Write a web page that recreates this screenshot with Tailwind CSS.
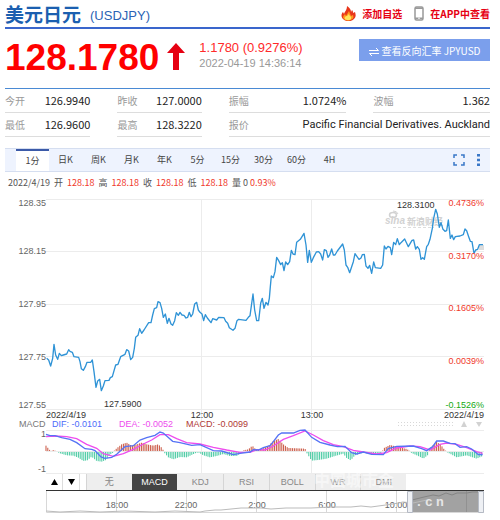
<!DOCTYPE html>
<html lang="zh-CN">
<head>
    <meta charset="UTF-8">
    <title>美元日元 (USDJPY)</title>
    <meta name="viewport" content="width=device-width, initial-scale=1.0">
    <script src="https://cdn.jsdelivr.net/npm/@tailwindcss/browser@4"></script>
</head>
<body class="bg-white pl-[5px] pr-[10px] font-['Noto_Sans_CJK_SC',sans-serif] text-[#333]">
    <!-- Header -->
    <header class="flex h-[29px] items-center border-b-2 border-[#3a66cc]">
        <h1 class="text-[19px] leading-[26px] font-bold text-[#1b5fb0]">美元日元</h1>
        <span class="ml-[9px] mt-1 font-['Liberation_Sans',sans-serif] text-[13px] text-[#2a63b5]">(USDJPY)</span>
        <nav class="ml-auto flex items-center text-[10px] font-bold text-[#e60012]">
            <a href="#" class="flex items-center gap-[6px]">
                <svg class="h-[15px] w-[15px]" viewBox="0 0 15 15">
                    <path d="M2 13C0 11 0 8 2 6l1 2C4 5 6 4 6 0c3 2 4 4 4 6l1-2c1 1 1 2 1 3l2-1c1 3 1 5-1 7-3 3-8 3-11 0z" fill="#e8361a"/>
                    <path d="M3 13c-2-2 0-4 1-5l1 2 3-5 2 5 2-1c1 2 0 4-1 4-2 2-6 2-8 0z" fill="#ff9a1f"/>
                    <path d="M4 13c-1-2 1-3 2-3l2-2c0 2 3 2 2 5-2 2-5 1-6 0z" fill="#ffe45c"/>
                </svg>
                添加自选
            </a>
            <a href="#" class="ml-3 flex items-center gap-[6px]">
                <svg class="h-[15px] w-[10px]" viewBox="0 0 10 15">
                    <rect x="1" y="1" width="8" height="13" rx="1.5" fill="#fff" stroke="#999" stroke-width="1.5"/>
                    <path d="M1 2.2h8M1 12.2h8" stroke="#999" stroke-width="1.6"/>
                    <circle cx="5" cy="12.3" r="0.8" fill="#fff"/>
                </svg>
                在APP中查看
            </a>
        </nav>
    </header>

    <!-- Price -->
    <section class="flex h-[59px] items-start font-['Liberation_Sans',sans-serif]">
        <strong class="mt-2 text-[37px] leading-[42px] text-[#ff0000]">128.1780</strong>
        <svg class="mt-[14px] ml-2 h-7 w-[18px]" viewBox="0 0 18 28">
            <path d="M9 0L18 10H12V27H6V10H0z" fill="#e60012"/>
        </svg>
        <div class="mt-[11px] ml-[14px]">
            <p class="text-[13px] leading-4 text-[#ff2a2a]">1.1780 (0.9276%)</p>
            <p class="text-[11px] leading-[14px] text-[#999]">2022-04-19 14:36:14</p>
        </div>
        <button class="mt-[10px] ml-auto flex h-[22px] w-[131px] items-center justify-center gap-[3px] bg-[#7b9fec] font-['Noto_Sans_CJK_SC',sans-serif] text-[10px] text-white">
            <svg class="mt-1 h-2 w-[10px]" viewBox="0 0 10 8" fill="none" stroke="#fff">
                <path d="M0 2.5H9.5L7 0M10 5.5H.5L3 8"/>
            </svg>
            查看反向汇率 JPYUSD
        </button>
    </section>

    <!-- Quote details -->
    <dl class="grid grid-cols-[85fr_84fr_117fr_116fr] gap-x-[27px] border-t border-[#4a8ad4] text-[11px] leading-[23px] text-[#222]">
        <div class="flex justify-between border-b border-[#ddd]"><dt class="text-[10px] text-[#999]">今开</dt><dd>126.9940</dd></div>
        <div class="flex justify-between border-b border-[#ddd]"><dt class="text-[10px] text-[#999]">昨收</dt><dd>127.0000</dd></div>
        <div class="flex justify-between border-b border-[#ddd]"><dt class="text-[10px] text-[#999]">振幅</dt><dd>1.0724%</dd></div>
        <div class="flex justify-between border-b border-[#ddd]"><dt class="text-[10px] text-[#999]">波幅</dt><dd>1.362</dd></div>
        <div class="flex justify-between border-b border-[#ddd]"><dt class="text-[10px] text-[#999]">最低</dt><dd>126.9600</dd></div>
        <div class="flex justify-between border-b border-[#ddd]"><dt class="text-[10px] text-[#999]">最高</dt><dd>128.3220</dd></div>
        <div class="col-span-2 flex justify-between border-b border-[#ddd]"><dt class="text-[10px] text-[#999]">报价</dt><dd class="font-['Roboto',sans-serif]">Pacific Financial Derivatives. Auckland</dd></div>
    </dl>

    <!-- Period tabs -->
    <nav class="mt-[11px] flex h-6 items-stretch border-y border-[#d5def0] bg-[#eef3fe] pl-[11px] text-[9px] text-[#444]">
        <button class="w-[33px] border-t-2 border-[#3b5aa8] bg-white">1分</button>
        <button class="w-[33px]">日K</button>
        <button class="w-[33px]">周K</button>
        <button class="w-[33px]">月K</button>
        <button class="w-[33px]">年K</button>
        <button class="w-[33px]">5分</button>
        <button class="w-[33px]">15分</button>
        <button class="w-[33px]">30分</button>
        <button class="w-[33px]">60分</button>
        <button class="w-[33px]">4H</button>
        <button class="mr-3 ml-auto" aria-label="全屏">
            <svg class="h-3 w-3" viewBox="0 0 12 12" fill="none" stroke="#3a78c8" stroke-width="1.5">
                <path d="M1 4V1h3M8 1h3v3M11 8v3H8M4 11H1V8"/>
            </svg>
        </button>
        <button class="mr-[10px]" aria-label="更多">
            <svg class="h-3 w-[3px]" viewBox="0 0 3 12" fill="#3a78c8">
                <path d="M0 0h3v2.5H0zM0 4.7h3v2.5H0zM0 9.5h3V12H0z"/>
            </svg>
        </button>
    </nav>

    <p class="flex gap-1 pl-[3px] text-[9px] leading-[22px] text-[#555]">
        <span>2022/4/19</span>
        <span>开</span><span class="text-[#f0392b]">128.18</span>
        <span>高</span><span class="text-[#f0392b]">128.18</span>
        <span>收</span><span class="text-[#f0392b]">128.18</span>
        <span>低</span><span class="text-[#f0392b]">128.18</span>
        <span>量 0 <span class="text-[#f0392b]">0.93%</span></span>
    </p>

    <!-- Price and MACD charts -->
    <svg class="block w-full font-['Liberation_Sans',sans-serif] text-[9px]" viewBox="5 194 485 280">
        <path d="M46 199.5H484M46 251.5H484M46 304.5H484M46 356.5H484M46 409.5H484M46 430.5H484M46 451.5H484M46 473.5H484M201.5 199V473M311.5 199V473" stroke="#ececec" fill="none"/>
        <!-- Watermark -->
        <g fill="#d2d2d2">
            <text x="385" y="224" class="text-[10px] font-bold italic">sina</text>
            <text x="407" y="225" class="font-['Noto_Sans_CJK_SC',sans-serif] text-[9px] font-bold">新浪财经</text>
            <ellipse cx="393" cy="215" rx="3.5" ry="2.5" fill="none" stroke="#d2d2d2" stroke-width="1.5"/>
            <path d="M393 211a5 4 0 0 1 5 3" fill="none" stroke="#d2d2d2"/>
            <path d="M393 227.5h41" stroke="#ddd" stroke-dasharray="3 2"/>
        </g>
        <path d="M479 245h5v5h-5z" fill="#ddd"/>
        <g transform="translate(0 190) scale(0.33333)">
            <polyline fill="none" stroke="#2f93d6" stroke-width="4" stroke-linejoin="round" points="140,505 146,510 152,528 158,505 162,463 167,495 173,508 178,490 184,497 190,495 200,492 206,479 210,484 217,487 222,500 236,502 240,515 244,536 250,541 256,530 261,517 272,517 277,510 282,545 288,592 293,573 299,568 304,602 310,588 315,572 327,571 331,563 337,560 347,525 354,523 362,500 375,493 380,479 386,483 392,509 398,502 403,475 407,442 414,436 419,416 425,430 432,420 446,398 453,398 458,375 463,356 470,353 474,335 480,338 485,355 490,382 496,372 502,400 507,385 513,402 518,406 524,392 529,368 535,376 540,367 546,375 552,376 558,384 563,382 568,367 573,380 578,372 584,342 590,337 595,360 600,367 606,372 611,392 616,374 622,384 633,398 638,386 650,390 656,382 672,383 677,394 683,400 688,413 699,421 705,415 711,392 716,388 738,391 745,382 750,377 759,312 764,360 770,392 776,392 782,340 787,325 792,355 798,337 804,345 808,325 811,290 814,258 820,263 825,245 830,202 836,212 842,224 847,218 852,242 857,216 863,224 869,215 874,181 879,192 885,194 890,157 901,148 912,130 918,165 923,217 928,181 934,217 940,203 949,186 956,185 962,192 968,210 973,179 979,182 984,202 989,195 995,177 1000,195 1005,195 1012,183 1028,162 1033,180 1038,225 1043,232 1049,248 1055,230 1060,215 1065,191 1077,208 1083,204 1087,194 1093,193 1098,228 1104,235 1109,226 1115,250 1121,216 1126,233 1142,235 1148,225 1153,168 1158,177 1164,169 1171,173 1175,194 1181,157 1187,164 1192,146 1198,164 1203,158 1214,147 1225,170 1236,151 1241,150 1247,177 1252,170 1258,178 1263,208 1268,203 1273,208 1280,170 1285,163 1290,148 1297,115 1301,85 1307,58 1312,72 1318,112 1323,98 1329,118 1335,124 1340,122 1345,90 1351,145 1356,135 1361,149 1366,140 1380,138 1390,134 1395,117 1400,122 1406,140 1411,154 1416,155 1422,190 1427,180 1433,178 1438,164 1449,164"/>
        </g>
        <g fill="#666" text-anchor="end">
            <text x="46" y="206">128.35</text>
            <text x="46" y="254">128.15</text>
            <text x="46" y="307">127.95</text>
            <text x="46" y="360">127.75</text>
            <text x="46" y="408">127.55</text>
            <text x="46" y="437">1</text>
            <text x="46" y="472">-1</text>
        </g>
        <g fill="#f0392b" text-anchor="end">
            <text x="484" y="206">0.4736%</text>
            <text x="484" y="259">0.3170%</text>
            <text x="484" y="311">0.1605%</text>
            <text x="484" y="364">0.0039%</text>
            <text x="484" y="408" fill="#12a812">-0.1526%</text>
        </g>
        <g fill="#333">
            <text x="397" y="208">128.3100</text>
            <text x="104" y="407">127.5900</text>
            <text x="46" y="418">2022/4/19</text>
            <text x="202" y="418" text-anchor="middle">12:00</text>
            <text x="312" y="418" text-anchor="middle">13:00</text>
            <text x="484" y="418" text-anchor="end">2022/4/19</text>
        </g>
        <text x="19" y="427" fill="#777">MACD</text>
        <text x="52" y="427" fill="#4d6bfa">DIF: -0.0101</text>
        <text x="119" y="427" fill="#ee4dee">DEA: -0.0052</text>
        <text x="186" y="427" fill="#b03a35">MACD: -0.0099</text>
        <path d="M398 422.5h57M398 425.5h57" stroke="#d8d8d8" stroke-dasharray="1 2"/>
        <path d="M461 427l3-6 3 6zM476 422h6l-3 5z" fill="#d2d2d2"/>
        <g transform="translate(0 405) scale(0.33333)" fill="none" stroke-width="3">
            <path id="macdUp" stroke="#c8503c"/>
            <path id="macdDown" stroke="#45c9a0"/>
            <polyline stroke="#ee4dee" stroke-width="4" points="138,95 165,93 200,95 230,101 260,118 290,130 310,146 340,154 370,146 400,133 430,117 455,105 480,89 505,89 530,101 560,113 600,117 640,127 680,135 720,142 750,142 770,134 795,135 820,123 850,103 880,92 915,78 940,90 970,107 1000,119 1030,125 1060,136 1090,141 1130,147 1160,143 1190,129 1230,123 1260,125 1290,135 1320,118 1340,114 1370,118 1400,128 1430,140 1448,145"/>
            <polyline stroke="#5673f5" stroke-width="4" points="138,88 150,92 165,92 185,98 210,103 230,113 255,131 275,133 285,137 303,156 315,160 335,157 350,148 375,125 400,122 420,105 440,98 465,91 480,81 490,84 518,109 540,113 575,121 600,119 640,137 665,138 700,149 720,145 750,141 760,134 775,135 790,128 810,122 820,110 835,90 845,84 880,84 900,76 915,75 935,97 960,112 990,120 1012,125 1035,124 1055,143 1070,147 1090,141 1115,148 1150,149 1165,131 1190,124 1240,123 1265,131 1280,137 1298,125 1310,108 1330,108 1350,115 1365,116 1380,127 1400,125 1415,132 1435,149 1448,149"/>
        </g>
    </svg>

    <!-- Indicator tabs -->
    <div class="relative mr-[6px] ml-[41px] flex h-[17px] border-b border-[#333] text-[9px] leading-4 text-[#888]">
        <button class="w-[17px] border-r border-[#ddd] text-black" aria-label="上移"><svg class="mx-auto h-[6px] w-[7px]" viewBox="0 0 7 6"><path d="M3.5 0L7 6H0z"/></svg></button>
        <button class="w-[17px] border-r border-[#ddd] text-black" aria-label="下移"><svg class="mx-auto h-[6px] w-[7px]" viewBox="0 0 7 6"><path d="M0 0H7L3.5 6z"/></svg></button>
        <div class="ml-[6px] mr-[78px] grid flex-1 grid-cols-7 font-['Liberation_Sans','Noto_Sans_CJK_SC',sans-serif]">
            <button class="border-l border-[#d5d5d5] bg-[#eee]">无</button>
            <button class="bg-[#444] text-white">MACD</button>
            <button class="bg-[#eee]">KDJ</button>
            <button class="border-l border-[#d5d5d5] bg-[#eee]">RSI</button>
            <button class="border-l border-[#d5d5d5] bg-[#eee]">BOLL</button>
            <button class="border-l border-[#d5d5d5] bg-[#eee]">WR</button>
            <button class="border-l border-[#d5d5d5] bg-[#eee]">DMI</button>
        </div>
        <svg class="pointer-events-none absolute -top-1 right-[42px] h-5 w-[130px] overflow-visible" viewBox="0 0 130 20" aria-hidden="true">
            <text x="2" y="16" fill="#fff" fill-opacity="0.5" class="font-['Noto_Sans_CJK_SC',sans-serif] text-[16px] font-bold">中国城市金</text>
        </svg>
    </div>

    <!-- Time range -->
    <svg class="block w-full font-['Liberation_Sans',sans-serif] text-[9px]" viewBox="5 490 485 24">
        <path d="M46.5 490V511.5H484M116.5 490V511M186.5 490V511M256.5 490V511M326.5 490V511M396.5 490V511" fill="none" stroke="#d8d8d8"/>
        <g fill="#666" text-anchor="middle">
            <text x="117" y="507">18:00</text>
            <text x="186" y="507">22:00</text>
            <text x="257" y="507">2:00</text>
            <text x="327" y="507">6:00</text>
            <text x="396" y="507">10:00</text>
        </g>
        <path d="M412 490H478V511H412z" fill="#a2a2a2"/>
        <path d="M466.5 490V511" stroke="#919191"/>
        <path d="M46 510l14 1 20-1 20 1 25-1 30 1 20-1 25 1 5-1 10-1 6 0 10-1 10-1 20 0 10 1 15-1 25 0 20-1 20 0 10-1 10 1 22-3 10-2 10 1 14-3" fill="none" stroke="#bbb"/>
        <path d="M412 499l12-3 9-2 6 1 7-3 6 2 5-2 10 0 5-1 6 0" fill="none" stroke="#858585"/>
        <path d="M407.5 490.5h5v21h-5zM478.5 490.5h5v21h-5z" fill="#eef0f4" stroke="#b5bac4"/>
        <text y="505" fill="#e6e6e6" class="font-['Liberation_Mono',monospace] text-[13px] font-bold"><tspan x="415">.</tspan><tspan x="425">c</tspan><tspan x="436">n</tspan></text>
    </svg>

    <script>
        // MACD histogram: [x, height] outline, bars are interpolated between the points
        const outline = [[138,16],[150,2],[155,0],[162,4],[166,0],[172,0],[180,-4],[200,-10],[220,-11],[235,-17],[250,-27],[262,-25],[275,-14],[290,-27],[305,-29],[318,-24],[330,-8],[342,0],[350,8],[365,20],[380,25],[395,16],[410,20],[425,25],[440,20],[460,16],[475,20],[485,10],[492,-1],[505,-16],[520,-22],[540,-15],[560,-16],[585,-4],[595,-1],[610,-10],[630,-16],[650,-12],[670,-6],[690,-12],[710,-12],[730,2],[745,5],[757,16],[768,4],[785,6],[805,15],[820,30],[835,36],[850,20],[865,9],[890,8],[915,7],[922,-6],[935,-26],[955,-24],[980,-20],[1005,-12],[1030,-5],[1040,-18],[1052,-25],[1065,-10],[1090,-2],[1120,-8],[1145,-7],[1150,8],[1170,18],[1195,12],[1220,6],[1235,-3],[1255,-12],[1270,-20],[1285,-8],[1290,8],[1310,28],[1325,15],[1335,2],[1350,-5],[1370,-16],[1400,-10],[1430,-20],[1448,-12]];
        let up = '';
        let down = '';
        let i = 0;
        for (let x = 138; x <= 1448; x += 5.4) {
            while (i < outline.length - 2 && outline[i + 1][0] < x) i++;
            const [x1, h1] = outline[i];
            const [x2, h2] = outline[i + 1];
            const h = h1 + (h2 - h1) * (x - x1) / (x2 - x1);
            const bar = `M${x} ${h > 0 ? 138 : 141}v${-h}`;
            if (h > 0) up += bar;
            else down += bar;
        }
        document.getElementById('macdUp').setAttribute('d', up);
        document.getElementById('macdDown').setAttribute('d', down);
    </script>
</body>
</html>
